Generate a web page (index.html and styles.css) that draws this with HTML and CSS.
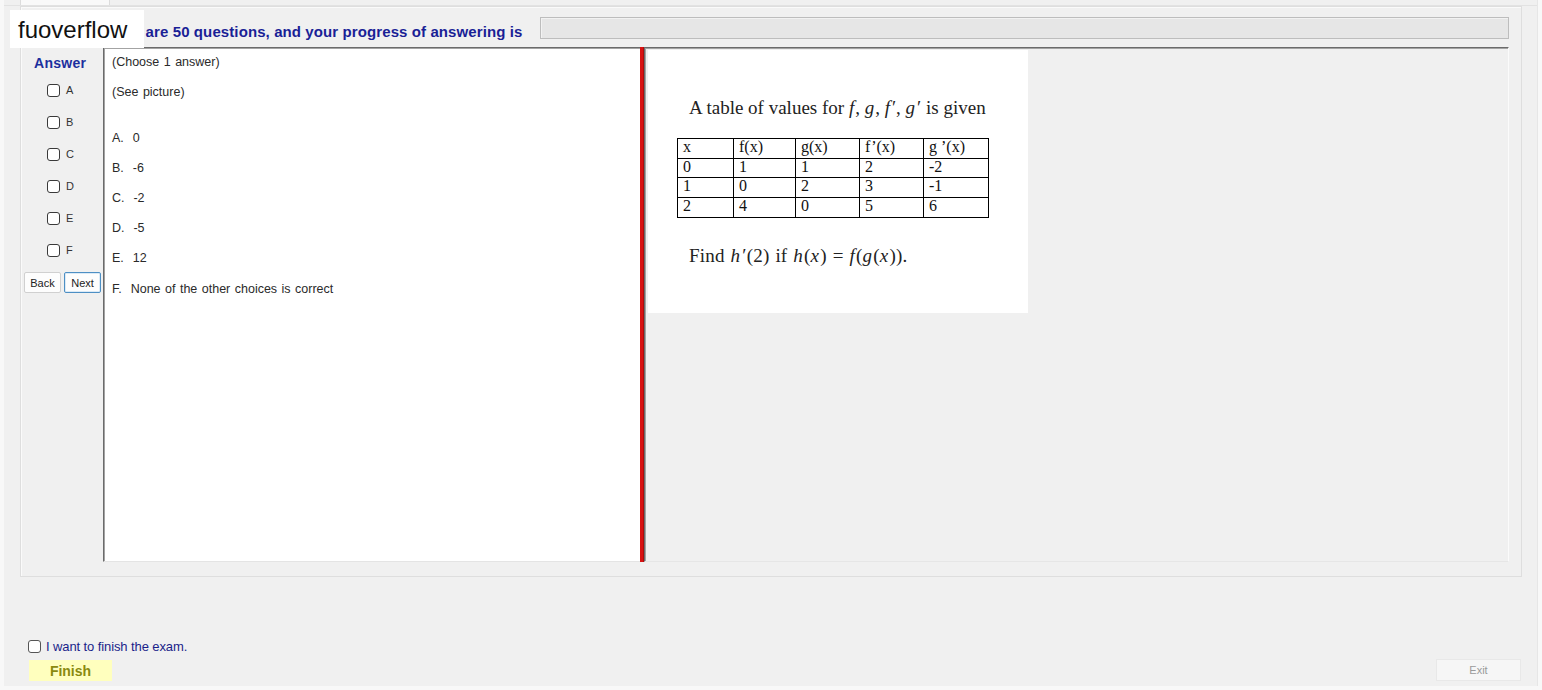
FILE: index.html
```html
<!DOCTYPE html>
<html lang="en">
<head>
<meta charset="utf-8">
<title>Exam</title>
<link rel="stylesheet" href="styles.css">
</head>
<body>
<div class="window">
  <div class="tabstrip"><div class="tab"></div></div>
  <div class="group">
    <div class="header">
      <span class="header-text">There are 50 questions, and your progress of answering is</span>
      <div class="progress"></div>
    </div>
    <div class="main">
      <div class="answers">
        <div class="answer-title">Answer</div>
        <ul class="choices">
          <li><span class="box"></span>A</li>
          <li><span class="box"></span>B</li>
          <li><span class="box"></span>C</li>
          <li><span class="box"></span>D</li>
          <li><span class="box"></span>E</li>
          <li><span class="box"></span>F</li>
        </ul>
        <div class="nav">
          <button class="btn">Back</button>
          <button class="btn focused">Next</button>
        </div>
      </div>
      <div class="question">
        <p>(Choose 1 answer)</p>
        <p>(See picture)</p>
        <p class="first-choice">A.&nbsp; 0</p>
        <p>B.&nbsp; -6</p>
        <p>C.&nbsp; -2</p>
        <p>D.&nbsp; -5</p>
        <p>E.&nbsp; 12</p>
        <p class="last-choice">F.&nbsp; None of the other choices is correct</p>
      </div>
      <div class="splitter"></div>
      <div class="picture-pane">
        <div class="picture">
          <p class="math-line">A table of values for <i>f</i>, <i>g</i>, <i>f</i><span class="prime">′</span>, <i>g</i><span class="prime">′</span> is given</p>
          <table class="values">
            <tr><td>x</td><td>f(x)</td><td>g(x)</td><td>f’(x)</td><td>g ’(x)</td></tr>
            <tr><td>0</td><td>1</td><td>1</td><td>2</td><td>-2</td></tr>
            <tr><td>1</td><td>0</td><td>2</td><td>3</td><td>-1</td></tr>
            <tr><td>2</td><td>4</td><td>0</td><td>5</td><td>6</td></tr>
          </table>
          <p class="math-line find">Find <i>h</i><span class="prime">′</span>(2) if <i>h</i>(<i>x</i>) = <i>f</i>(<i>g</i>(<i>x</i>)).</p>
        </div>
      </div>
    </div>
  </div>
  <div class="footer">
    <div class="finish-block">
      <label class="finish-check"><span class="box round"></span>I want to finish the exam.</label>
      <button class="finish-btn">Finish</button>
    </div>
    <button class="exit-btn">Exit</button>
  </div>
  <div class="watermark">fuoverflow</div>
</div>
</body>
</html>
```
FILE: styles.css
```css
* { box-sizing: border-box; }

html, body {
  margin: 0;
  padding: 0;
  background: #f8f8f8;
  font-family: "Liberation Sans", Arial, sans-serif;
}

.window {
  position: relative;
  width: 1534px;
  height: 686px;
  margin-left: 4px;
  background: #f0f0f0;
  border-right: 1px solid #e6e6e6;
  display: flex;
  flex-direction: column;
}

.tabstrip {
  height: 6px;
  border-bottom: 1px solid #e2e2e2;
}

.tab {
  margin-left: 16px;
  width: 90px;
  height: 5px;
  background: #f9f9f9;
  border-left: 1px solid #dcdcdc;
  border-right: 1px solid #dcdcdc;
}

.group {
  margin-left: 16px;
  width: 1502px;
  height: 571px;
  border: 1px solid #dedede;
  box-shadow: inset 1px 1px 0 #fafafa;
  padding: 10px 12px 0 3px;
}

.header {
  display: flex;
  height: 23px;
}

.header-text {
  margin-left: 76px;
  margin-top: 7px;
  line-height: 16px;
  font-size: 15px;
  letter-spacing: 0.1px;
  font-weight: bold;
  color: #1a1f96;
  white-space: nowrap;
}

.progress {
  margin-left: auto;
  width: 969px;
  height: 22px;
  background: #e6e6e6;
  border: 1px solid #bdbdbd;
  box-shadow: inset 1px 1px 0 #f2f2f2;
}

.main {
  margin-top: 7px;
  height: 515px;
  display: flex;
}

.answers {
  width: 79px;
  flex: none;
  padding-top: 8px;
}

.answer-title {
  padding-left: 10px;
  height: 16px;
  line-height: 16px;
  font-size: 14px;
  letter-spacing: 0.3px;
  font-weight: bold;
  color: #1c2f9e;
}

.choices {
  list-style: none;
  margin: 3px 0 0 0;
  padding: 0;
}

.choices li {
  height: 32px;
  display: flex;
  align-items: center;
  gap: 6px;
  padding-left: 23px;
  font-size: 11px;
  color: #333;
}

.box {
  display: inline-block;
  width: 13px;
  height: 13px;
  border: 1px solid #3a3a3a;
  border-radius: 3px;
  background: #fff;
}

.nav {
  display: flex;
  gap: 3px;
  margin-top: 6px;
}

.btn {
  width: 37px;
  height: 21px;
  padding: 0;
  border: 1px solid #d0d0d0;
  border-radius: 2px;
  background: #fdfdfd;
  font-family: "Liberation Sans", Arial, sans-serif;
  font-size: 11px;
  color: #222;
}

.btn.focused {
  border-color: #4d8fc4;
  box-shadow: inset 0 0 0 1px #dbeaf6;
}

.question {
  width: 537px;
  flex: none;
  background: #fff;
  border-left: 1px solid #6b6b6b;
  border-top: 1px solid #6b6b6b;
  border-bottom: 1px solid #e4e4e4;
  box-shadow: inset 1px 1px 0 #a3a3a3;
  padding: 6px 0 0 8px;
  display: flex;
  flex-direction: column;
  gap: 14px;
}

.question p {
  margin: 0;
  height: 16px;
  line-height: 16px;
  font-size: 12.5px;
  word-spacing: 1px;
  color: #2a2a2a;
  white-space: nowrap;
}

.question .first-choice { margin-top: 16px; }
.question .last-choice { margin-top: 1px; }

.splitter {
  width: 4px;
  flex: none;
  background: #d81212;
  border-right: 1px solid #b00c0c;
}

.picture-pane {
  flex: 1;
  border-left: 1px solid #6b6b6b;
  border-top: 1px solid #6b6b6b;
  border-bottom: 1px solid #e6e6e6;
  border-right: 1px solid #fbfbfb;
  box-shadow: inset 1px 1px 0 #a3a3a3;
  padding: 2px 0 0 3px;
}

.picture {
  width: 380px;
  height: 263px;
  background: #fff;
  padding: 46px 0 0 29px;
  color: #222;
  font-family: "Liberation Serif", "Times New Roman", serif;
}

.math-line {
  margin: 0 0 0 12px;
  height: 24px;
  line-height: 24px;
  font-size: 19px;
  white-space: nowrap;
}

.math-line i {
  padding-right: 1px;
}

.prime {
  margin-left: 1px;
}

.values {
  margin-top: 18px;
  border-collapse: collapse;
  border: 1.5px solid #000;
  font-family: "Liberation Serif", "Times New Roman", serif;
  font-size: 16px;
  color: #111;
}

.values td {
  border: 1px solid #000;
  height: 19.7px;
  line-height: 16px;
  padding: 0 0 0 5px;
  vertical-align: top;
}

.values td:nth-child(1) { width: 56px; }
.values td:nth-child(2) { width: 62px; }
.values td:nth-child(3) { width: 64px; }
.values td:nth-child(4) { width: 64px; }
.values td:nth-child(5) { width: 65px; }

.math-line.find {
  margin-top: 26px;
  letter-spacing: 0.2px;
  word-spacing: 1px;
}

.footer {
  margin-top: auto;
  padding: 0 16px 5px 24px;
  display: flex;
  justify-content: space-between;
  align-items: flex-end;
}

.finish-block {
  display: flex;
  flex-direction: column;
}

.finish-check {
  display: flex;
  align-items: center;
  gap: 5px;
  height: 13px;
  margin-top: 1px;
  font-size: 13px;
  color: #1a1f8a;
  letter-spacing: -0.1px;
}

.box.round {
  border-color: #555;
  border-radius: 3px;
}

.finish-btn {
  margin: 7px 0 0 1px;
  width: 83px;
  height: 21px;
  padding: 0;
  border: none;
  background: #ffffbe;
  font-family: "Liberation Sans", Arial, sans-serif;
  font-size: 14px;
  font-weight: bold;
  color: #8a8a10;
}

.exit-btn {
  width: 85px;
  height: 22px;
  padding: 0;
  border: 1px solid #e8e8e8;
  background: #f6f6f6;
  font-family: "Liberation Sans", Arial, sans-serif;
  font-size: 11px;
  color: #9a9a9a;
}

.watermark {
  position: absolute;
  left: 6px;
  top: 10px;
  width: 134px;
  height: 38px;
  background: #fff;
  padding-left: 8px;
  line-height: 40px;
  font-size: 24px;
  color: #111;
  font-family: "Liberation Sans", Arial, sans-serif;
}
```
